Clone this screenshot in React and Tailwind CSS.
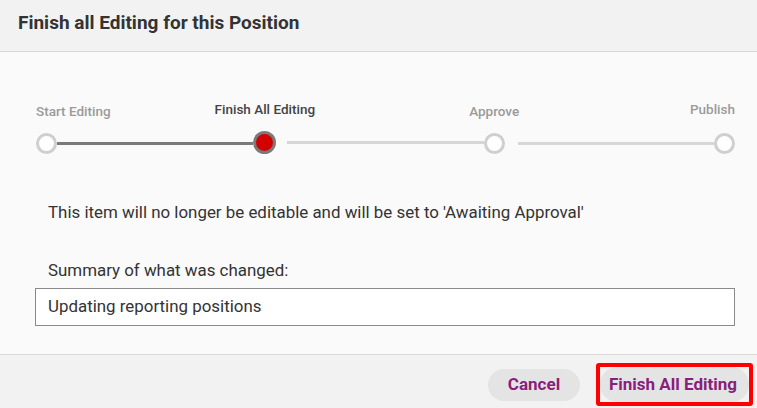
import React from 'react';

const steps = [
  { label: 'Start Editing', state: 'done', align: 'items-start' },
  { label: 'Finish All Editing', state: 'current', align: 'items-center' },
  { label: 'Approve', state: 'todo', align: 'items-center' },
  { label: 'Publish', state: 'todo', align: 'items-end' },
];

const Step = ({ step, last }) => (
  <div className={`flex flex-col ${step.align} ${step.state === 'current' ? 'w-[23px]' : 'w-[21px]'}`}>
    <span
      className={`whitespace-nowrap text-[13.5px] leading-[16px] font-medium ${
        step.state === 'current' ? 'text-[#444]' : 'text-[#9a9a9a]'
      } ${last ? 'mb-[16px]' : 'mb-[14px]'}`}
    >
      {step.label}
    </span>
    {step.state === 'current' ? (
      <div className="h-[23px] w-[23px] rounded-full border-[3px] border-[#7a7a7a] bg-[#d40000]" />
    ) : (
      <div className="h-[21px] w-[21px] rounded-full border-[3px] border-[#cfcfcf] bg-white" />
    )}
  </div>
);

const App = () => {
  return (
    <div className="h-[408px] w-[757px] bg-[#fafafa] font-['Roboto',sans-serif] text-[#333]">
      <div className="flex h-[52px] items-center border-b border-[#d9d9d9] bg-[#f2f2f2] pb-[4px] pl-[18px]">
        <h1 className="text-[19px] font-bold text-[#333]">Finish all Editing for this Position</h1>
      </div>

      <div className="h-[302px] pl-[35px] pr-[22px] pt-[49px]">
        <div className="ml-px flex items-end">
          <Step step={steps[0]} />
          <div className="mb-[9px] h-[3px] flex-1 bg-[#7a7a7a]" />
          <Step step={steps[1]} />
          <div className="mb-[10px] ml-[11px] h-[3px] flex-1 bg-[#d6d6d6]" />
          <Step step={steps[2]} />
          <div className="mb-[9px] ml-[13px] h-[3px] flex-1 bg-[#d6d6d6]" />
          <Step step={steps[3]} last />
        </div>

        <p className="mt-[46px] pl-[13px] text-[16.9px] leading-[24px]">
          This item will no longer be editable and will be set to 'Awaiting Approval'
        </p>

        <p className="mt-[34px] pl-[13px] text-[16.9px] leading-[24px]">Summary of what was changed:</p>

        <div className="mt-[6px] flex h-[38px] items-center border border-[#8a8a8a] bg-white px-[12px] text-[16.9px]">
          Updating reporting positions
        </div>
      </div>

      <div className="flex h-[54px] items-center justify-end gap-[16px] border-t border-[#d9d9d9] bg-[#f2f2f2] pb-[1px] pr-[4px] pt-[7px]">
        <button className="h-[32px] w-[92px] rounded-full bg-[#e4e4e4] text-[17px] font-bold text-[#8b1e7a]">
          Cancel
        </button>
        <div className="rounded-[3px] border-4 border-[#ff0000]">
          <button className="h-[35px] w-[149px] rounded-full bg-[#e4e4e4] pr-[3px] text-[17px] font-bold text-[#8b1e7a]">
            Finish All Editing
          </button>
        </div>
      </div>
    </div>
  );
};

export default App;
